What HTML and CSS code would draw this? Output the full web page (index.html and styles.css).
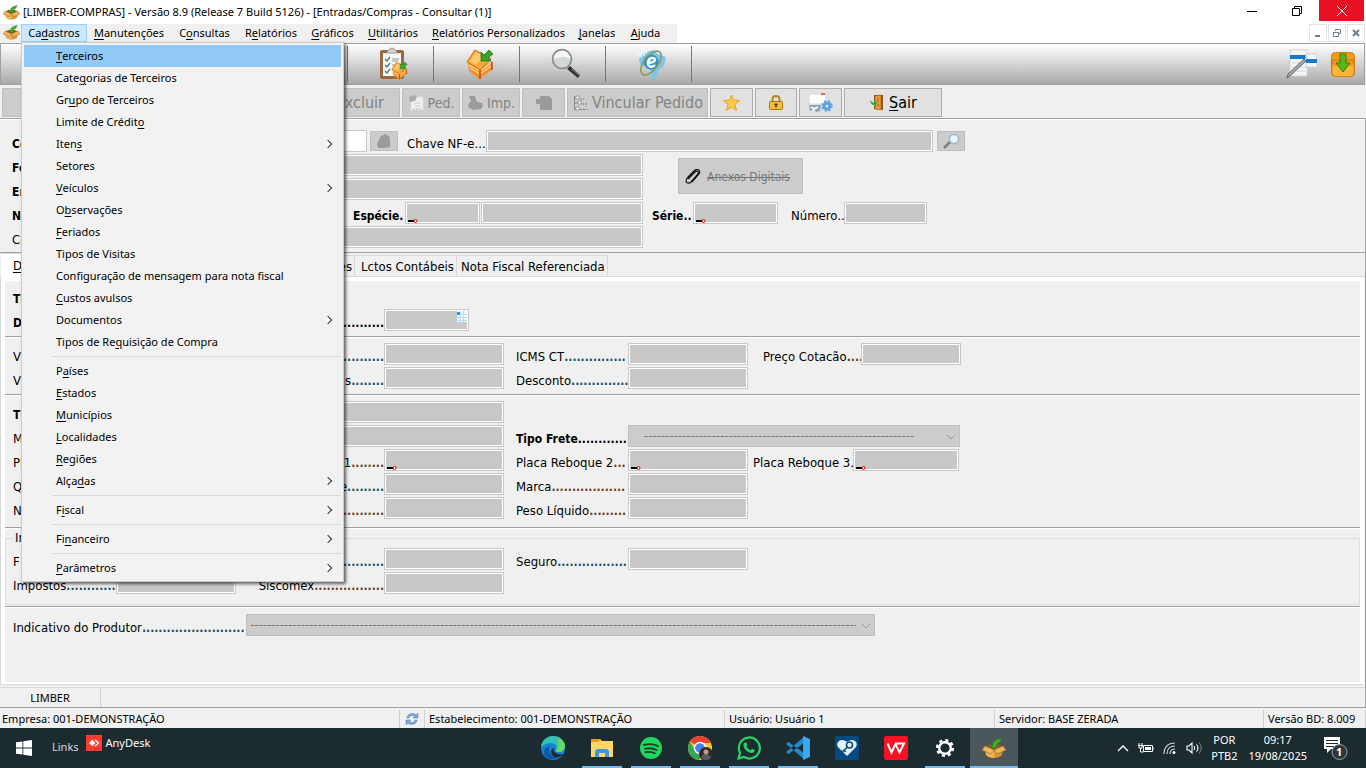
FILE: index.html
```html
<!DOCTYPE html>
<html lang="pt-BR">
<head>
<meta charset="utf-8">
<title>[LIMBER-COMPRAS] - Entradas/Compras</title>
<link rel="stylesheet" href="styles.css">
</head>
<body>
<svg class="defs" aria-hidden="true">
  <defs>
    <symbol id="basket" viewBox="0 0 24 24">
      <path d="M3 11l9 3 9-3-1 8c-2 2-5 3-8 3s-6-1-8-3z" fill="#d9953a"/>
      <path d="M3 11l9 3v8c-3 0-6-1-8-3z" fill="#edb45c"/>
      <path d="M3 11l5-3 4 2 4-2 5 3-9 3z" fill="#8a5a20"/>
      <path d="M3 10L0 14l9 4 3-4zM21 10l3 4-9 4-3-4z" fill="#efb660" stroke="#a8701f" stroke-width=".7"/>
      <path d="M10 12c0-5 2-8 6-9l4-1-2 4c-3 1-4 3-4 6z" fill="#3fae2a" stroke="#1f7a16" stroke-width=".6"/>
    </symbol>
    <symbol id="crate" viewBox="0 0 28 32">
      <path d="M2 15l12 6 12-8v9l-13 9-10-8z" fill="#f3922a"/>
      <path d="M3 17l11 6 11-8M4 20l10 6 11-8" stroke="#ffd894" stroke-width="1.2" fill="none"/>
      <path d="M14 22v9M26 14v8" stroke="#c63a12" stroke-width="1.4"/>
      <path d="M1 14L9 2l16 9-11 11z" fill="#f8a93a" stroke="#c46c10"/>
      <path d="M4 13l6-9 8 4-8 9z" fill="#fdc96a"/>
      <path d="M15 13V4l3 3 5-5 4 4-5 4 3 3z" fill="#3aa32b" stroke="#196f14" stroke-width=".7"/>
    </symbol>
    <symbol id="chev" viewBox="0 0 10 6"><path d="M1 1l4 4 4-4" fill="none" stroke="#9a9a9a"/></symbol>
    <symbol id="mark" viewBox="0 0 10 5"><path d="M0 2h6v2H0z" fill="#000"/><circle cx="7.5" cy="3" r="1.5" fill="#fff" stroke="#e00000"/></symbol>
  </defs>
</svg>
<div class="app">
  <header class="titlebar">
    <svg class="ico16"><use href="#basket"/></svg>
    <h1>[LIMBER-COMPRAS] - Versão 8.9 (Release 7 Build 5126) - [Entradas/Compras - Consultar (1)]</h1>
    <div class="winbtns">
      <button aria-label="Minimizar"><svg viewBox="0 0 12 12"><path d="M1 6.5h10" stroke="#000"/></svg></button>
      <button aria-label="Restaurar"><svg viewBox="0 0 12 12"><path d="M1.500 3.500h7v7h-7zM3.500 3V1.500h7v7H9" stroke="#000" fill="none"/></svg></button>
      <button class="close" aria-label="Fechar"><svg viewBox="0 0 12 12"><path d="M1 1l10 10M11 1L1 11" stroke="#fff"/></svg></button>
    </div>
  </header>

  <div class="menubar">
    <nav class="menus">
      <svg class="ico16"><use href="#basket"/></svg>
      <button class="open">Ca<u>d</u>astros</button>
      <button><u>M</u>anutenções</button>
      <button>C<u>o</u>nsultas</button>
      <button>R<u>e</u>latórios</button>
      <button><u>G</u>ráficos</button>
      <button><u>U</u>tilitários</button>
      <button><u>R</u>elatórios Personalizados</button>
      <button><u>J</u>anelas</button>
      <button><u>A</u>juda</button>
      <div class="dropdown">
        <button class="sel"><u>T</u>erceiros</button>
        <button>Cate<u>g</u>orias de Terceiros</button>
        <button>Gr<u>u</u>po de Terceiros</button>
        <button>Limite de Crédit<u>o</u></button>
        <button class="sub">Iten<u>s</u></button>
        <button>Setores</button>
        <button class="sub"><u>V</u>eículos</button>
        <button>O<u>b</u>servações</button>
        <button><u>F</u>eriados</button>
        <button>Tipos de Visitas</button>
        <button>Configuração de mensagem para nota fiscal</button>
        <button><u>C</u>ustos avulsos</button>
        <button class="sub">Documentos</button>
        <button>Tipos de Re<u>q</u>uisição de Compra</button>
        <hr>
        <button>P<u>a</u>íses</button>
        <button><u>E</u>stados</button>
        <button><u>M</u>unicípios</button>
        <button><u>L</u>ocalidades</button>
        <button><u>R</u>egiões</button>
        <button class="sub">Alça<u>d</u>as</button>
        <hr>
        <button class="sub">F<u>i</u>scal</button>
        <hr>
        <button class="sub">Fi<u>n</u>anceiro</button>
        <hr>
        <button class="sub"><u>P</u>arâmetros</button>
      </div>
    </nav>
    <div class="mdi">
      <button aria-label="Minimizar janela"><svg viewBox="0 0 10 10"><path d="M2 8h5" stroke="#6f7f8f" stroke-width="2"/></svg></button>
      <button aria-label="Restaurar janela"><svg viewBox="0 0 10 10"><path d="M1.500 4.500h5v4h-5zM1 4.500h6M3.500 3V1.500h5v4H7" stroke="#6f7f8f" fill="none"/></svg></button>
      <button aria-label="Fechar janela"><svg viewBox="0 0 10 10"><path d="M2 2l6 6M8 2L2 8" stroke="#6f7f8f" stroke-width="2"/></svg></button>
    </div>
  </div>

  <div class="bigbar">
    <button aria-label="Atalho 1"></button><button aria-label="Atalho 2"></button><button aria-label="Atalho 3"></button><button aria-label="Atalho 4"></button>
    <button aria-label="Pedidos"><svg width="30" height="34" viewBox="0 0 30 34"><rect x="1" y="3" width="24" height="29" rx="2" fill="#9a6a3c"/><rect x="4" y="6" width="18" height="23" fill="#f7f7f5"/><path d="M7 6l2-3h2a2 2 0 0 1 4 0h2l2 3z" fill="#d8d8d8" stroke="#777" stroke-width=".7"/><path d="M6 12l2 2 3-4M6 18l2 2 3-4M6 24l2 2 3-4" stroke="#3c7c99" stroke-width="1.300" fill="none"/><path d="M13 12h7M13 14h6M13 18h5" stroke="#999"/><svg x="12" y="14" width="17" height="19"><use href="#crate"/></svg></svg></button>
    <button aria-label="Compras"><svg width="28" height="32"><use href="#crate"/></svg></button>
    <button aria-label="Pesquisar"><svg width="32" height="32" viewBox="0 0 32 32"><path d="M20 18l10 9-2 3-11-9z" fill="#333"/><path d="M22 21l7 6" stroke="#999"/><circle cx="12" cy="11" r="9.500" fill="#d3d7d8" stroke="#858585" stroke-width="1.500"/><path d="M4 11a8 8 0 0 1 16 0c-5-3-11-2-16 0z" fill="#fff" opacity=".8"/></svg></button>
    <button aria-label="NF-e"><svg width="32" height="32" viewBox="0 0 32 32"><path d="M8 5l9-3 5 4 8 3-2 9-5 4-2 6-4 4-3-4 2-4-5-5-7-2-1-6z" fill="#7fc4ea"/><circle cx="15" cy="14" r="7.500" fill="#2d95ca"/><ellipse cx="15" cy="15" rx="7" ry="14" transform="rotate(38 15 15)" fill="none" stroke="#8f9a55" stroke-width="1.600"/><path d="M11 15c3 0 8-1 8-3 0-3-6-3-7 2-1 5 4 6 7 3" fill="none" stroke="#fff" stroke-width="2.400"/><path d="M1 8V1l4 7V1M8 8V1h4M8 4.500h3" stroke="#eef4f7" stroke-width="1.500" fill="none"/></svg></button>
    <span class="grow"></span>
    <button class="plain" aria-label="Editar lista"><svg width="32" height="30" viewBox="0 0 32 30"><rect x="4" y="1" width="17" height="26" fill="#f3f5f6" stroke="#ccd3d8"/><rect x="4" y="6" width="17" height="4" fill="#1679c8"/><path d="M6 14h13M6 18h13M6 22h13" stroke="#d4d9dc"/><rect x="20" y="5" width="11" height="13" fill="#f3f5f6" stroke="#ccd3d8"/><rect x="20" y="10" width="11" height="4" fill="#1679c8"/><path d="M1 29l1-4L18 10l2 2L4 27z" fill="#a8a8a8" stroke="#555" stroke-width=".8"/></svg></button>
    <button class="plain" aria-label="Baixar"><svg width="24" height="25" viewBox="0 0 24 25"><rect x=".5" y=".5" width="23" height="24" rx="4" fill="#f19a1d" stroke="#d27f0d"/><path d="M2 8h20M2 8l-1 4M22 8l1 4" stroke="#c9770c"/><path d="M2 14h20v6q0 4-4 4H6q-4 0-4-4z" fill="#fbb63a"/><path d="M9 2h6v9h4l-7 9-7-9h4z" fill="#58b616" stroke="#2f8409"/></svg></button>
  </div>

  <div class="actions">
    <button disabled aria-label="Ação 1"></button><button disabled aria-label="Ação 2"></button><button disabled aria-label="Ação 3"></button>
    <button disabled class="right">Excluir</button>
    <button disabled class="small"><svg width="16" height="17" viewBox="0 0 16 17"><path d="M3 3h12v13H3z" fill="#f2f2f2" stroke="#ddd"/><path d="M1 3l5-2 3 2-2 4-5 1z" fill="#aaa"/><path d="M7 9h6M7 12h6M5 15h8" stroke="#b5b5b5" stroke-dasharray="2 1"/></svg>Ped.</button>
    <button disabled class="small"><svg width="16" height="16" viewBox="0 0 16 16"><path d="M2 1h6l2 6 5 1 1 3-2 3-8 1-5-3 1-4 2-1z" fill="#9b9b9f"/></svg>Imp.</button>
    <button disabled class="b43" aria-label="Documento"><svg width="16" height="16" viewBox="0 0 16 16"><path d="M4 1h9l3 3v11H4V9H0V4h4z" fill="#9b9b9f"/></svg></button>
    <button disabled class="b141"><svg width="16" height="16" viewBox="0 0 16 16"><path d="M2.500 1v14M2 3h3M2 8h4M2 14h3" stroke="#888" fill="none"/><path d="M4 1h3v3H4zM6 6h3v3H6zM4 12h3v3H4z" fill="#fff" stroke="#888" stroke-width=".8"/><path d="M8 4h4M10 9h5M8 14.500h7" stroke="#777" stroke-dasharray="2 1"/></svg>Vincular Pedido</button>
    <button class="b43" aria-label="Favorito"><svg width="17" height="17" viewBox="0 0 17 17"><path d="M8.500 1l2 5 6 .5-4.500 4 1.500 6-5-3.300-5 3.300 1.500-6L.5 6.500l6-.5z" fill="#fbc94a" stroke="#eaa32a"/></svg></button>
    <button class="b42" aria-label="Bloquear"><svg width="14" height="15" viewBox="0 0 14 15"><path d="M3.500 7V4a3.500 3 0 0 1 7 0v3" fill="none" stroke="#b5861d" stroke-width="2"/><rect x=".5" y="6.500" width="13" height="8" rx="1" fill="#f3bd3b" stroke="#a87810"/><path d="M7 8.500v4M5.500 9.500h3" stroke="#4c3503" stroke-width="1.300"/></svg></button>
    <button class="b43" aria-label="Configurar"><svg width="25" height="20" viewBox="0 0 25 20"><rect x="1" y="1" width="17" height="10" rx="2" fill="#fdfdfd" stroke="#d5d9dd"/><path d="M13 1h4" stroke="#dd3b3b" stroke-width="1.500"/><path d="M1 12h12l-1 6-4 1-2-3-4 2z" fill="#8fa3ad"/><path d="M3 14l3 2 4-2" stroke="#e9f6f8" stroke-width="2" fill="none"/><circle cx="19" cy="13" r="3" fill="#d5eaff" stroke="#5c9fe4" stroke-width="3"/><circle cx="19" cy="13" r="5" fill="none" stroke="#5c9fe4" stroke-width="1.500" stroke-dasharray="2 2"/></svg></button>
    <button class="b98"><svg width="16" height="17" viewBox="0 0 16 17"><path d="M5 1l9 0v15l-9-1z" fill="#8a5317"/><path d="M6 2l6-1v15l-6-1z" fill="#e39a3c" stroke="#a3661c" stroke-width=".7"/><path d="M8 4h2v4H8zM8 10h2v3H8z" fill="#c77f26"/><path d="M1 6c2 3 3 3 4 2V6l3 3-3 4v-2C3 11 1 9 1 6z" fill="#2eab35"/></svg><span><u>S</u>air</span></button>
  </div>

  <main class="window">
    <section class="head">
      <div class="row">
        <label class="fld keyfld bold"><span class="cap">Có</span><input class="white" type="text"></label>
        <button disabled class="sq" aria-label="Buscar código"><svg width="16" height="16" viewBox="0 0 16 16"><path d="M5 3l4-2 4 2 1 4v7l-5 1H2l-1-4 2-5z" fill="#9b9b9f"/></svg></button>
        <label class="fld nfe"><span class="cap">Chave NF-e...</span><input type="text" disabled></label>
        <button class="sq" aria-label="Consultar chave"><svg width="17" height="16" viewBox="0 0 17 16"><path d="M1 15l6-6" stroke="#777f86" stroke-width="2.500"/><circle cx="11" cy="6" r="4.500" fill="#eaf6ff" stroke="#9fb6c8" stroke-width="1.500"/></svg></button>
      </div>
      <div class="pair">
        <div class="stack">
          <div class="row"><label class="fld lead bold"><span class="cap">Fo</span><input type="text" disabled></label></div>
          <div class="row"><label class="fld lead bold"><span class="cap">En</span><input type="text" disabled></label></div>
        </div>
        <button disabled class="attach"><svg width="16" height="16" viewBox="0 0 16 16"><path d="M3 10l7-7c2-2 4 0 3 2l-7 8c-2 2-5 1-5-1s1-3 3-5l6-6c3-2 6 1 4 4l-7 8" fill="none" stroke="#111" stroke-width="1.200"/></svg><s>Anexos Digitais</s></button>
      </div>
      <div class="row">
        <label class="fld nat bold"><span class="cap">Na</span><input type="text" disabled></label>
        <label class="fld esp bold"><span class="cap">Espécie.</span><input type="text" disabled><svg class="mark"><use href="#mark"/></svg></label>
        <input class="espdesc" type="text" disabled aria-label="Descrição da espécie">
        <label class="fld ser bold"><span class="cap">Série..</span><input type="text" disabled><svg class="mark"><use href="#mark"/></svg></label>
        <label class="fld num"><span class="cap">Número..</span><input type="text" disabled></label>
      </div>
      <div class="row"><label class="fld lead"><span class="cap">Co</span><input type="text" disabled></label></div>
    </section>

    <div class="tabs">
      <button class="active"><u>D</u></button>
      <button class="wide">es</button>
      <button class="t102">Lctos Contábeis</button>
      <button class="t151">Nota Fiscal Referenciada</button>
    </div>

    <div class="panel">
      <section>
        <div class="row"><span class="cap bold">Ti</span></div>
        <div class="row">
          <label class="fld c1 bold"><span class="cap">D</span><input type="text" disabled></label>
          <label class="fld c2 date bold"><span class="cap">..........</span><input type="text" disabled><svg class="cal" viewBox="0 0 10 11"><path d="M0 0h10v11H0z" fill="#f2fbff"/><path d="M0 1h3v3H0z" fill="#2a9be6"/><path d="M3 3.500h7M0 6.500h10M0 9.500h10M3.500 0v11M6.500 0v11" stroke="#b5e2f3"/></svg></label>
        </div>
      </section>
      <section>
        <div class="row">
          <label class="fld c1"><span class="cap">V</span><input type="text" disabled></label>
          <label class="fld c2"><span class="cap"><i class="teal">..........</i></span><input type="text" disabled></label>
          <label class="fld c3"><span class="cap">ICMS CT<i class="teal">...............</i></span><input type="text" disabled></label>
          <label class="fld c4"><span class="cap">Preço Cotacão<i>....</i></span><input type="text" disabled></label>
        </div>
        <div class="row">
          <label class="fld c1"><span class="cap">V</span><input type="text" disabled></label>
          <label class="fld c2"><span class="cap">s<i class="teal">........</i></span><input type="text" disabled></label>
          <label class="fld c3"><span class="cap">Desconto<i class="teal">..............</i></span><input type="text" disabled></label>
        </div>
      </section>
      <section class="transport">
        <div class="row"><label class="fld long bold"><span class="cap">Ti</span><input type="text" disabled></label></div>
        <div class="row">
          <label class="fld long"><span class="cap">M</span><input type="text" disabled></label>
          <label class="fld frete bold"><span class="cap">Tipo Frete............</span><select disabled><option>----------------------------------------------------------------</option></select><svg class="arrow"><use href="#chev"/></svg></label>
        </div>
        <div class="row">
          <label class="fld c1"><span class="cap">Pl</span><input type="text" disabled></label>
          <label class="fld c2"><span class="cap">1<i>........</i></span><input type="text" disabled><svg class="mark"><use href="#mark"/></svg></label>
          <label class="fld c3 tight"><span class="cap">Placa Reboque 2<i>...</i></span><input type="text" disabled><svg class="mark"><use href="#mark"/></svg></label>
          <label class="fld c5"><span class="cap">Placa Reboque 3.</span><input type="text" disabled><svg class="mark"><use href="#mark"/></svg></label>
        </div>
        <div class="row">
          <label class="fld c1"><span class="cap">Q</span><input type="text" disabled></label>
          <label class="fld c2"><span class="cap">e<i class="teal">.........</i></span><input type="text" disabled></label>
          <label class="fld c3"><span class="cap">Marca<i>..................</i></span><input type="text" disabled></label>
        </div>
        <div class="row">
          <label class="fld c1"><span class="cap">N</span><input type="text" disabled></label>
          <label class="fld c2"><span class="cap"><i>..........</i></span><input type="text" disabled></label>
          <label class="fld c3"><span class="cap">Peso Líquido<i>.........</i></span><input type="text" disabled></label>
        </div>
      </section>
      <section class="boxed">
        <fieldset>
          <legend>In</legend>
          <div class="row">
            <label class="fld c1"><span class="cap">F</span><input type="text" disabled></label>
            <label class="fld c2"><span class="cap"><i class="teal">..........</i></span><input type="text" disabled></label>
            <label class="fld c3"><span class="cap">Seguro<i class="teal">.................</i></span><input type="text" disabled></label>
          </div>
          <div class="row">
            <label class="fld c1"><span class="cap">Impostos<i class="teal">............</i></span><input type="text" disabled></label>
            <label class="fld c2"><span class="cap">Siscomex<i>.................</i></span><input type="text" disabled></label>
          </div>
        </fieldset>
      </section>
      <section class="last">
        <div class="row">
          <label class="fld prod"><span class="cap">Indicativo do Produtor<i class="teal">.........................</i></span><select disabled><option>------------------------------------------------------------------------------------------------------------------------------------------------</option></select><svg class="arrow"><use href="#chev"/></svg></label>
        </div>
      </section>
    </div>
    <div class="userbar"><span>LIMBER</span></div>
  </main>

  <footer class="status">
    <span>Empresa: 001-DEMONSTRAÇÃO</span>
    <span class="mid"><svg width="14" height="14" viewBox="0 0 14 14"><path d="M2 6c0-4 6-6 9-3l2-2v5H8l2-2C7 3 4 4 4 6zM12 8c0 4-6 6-9 3l-2 2V8h5l-2 2c3 1 6 0 6-2z" fill="#7aa5d8" stroke="#4c7cb8" stroke-width=".5"/></svg></span>
    <span>Estabelecimento: 001-DEMONSTRAÇÃO</span>
    <span>Usuário: Usuário 1</span>
    <span>Servidor: BASE ZERADA</span>
    <span>Versão BD: 8.009</span>
  </footer>

  <div class="taskbar">
    <div class="tleft">
      <button class="start" aria-label="Iniciar"><svg width="16" height="16" viewBox="0 0 16 16"><path d="M0 2.300L6.500 1.400v6.100H0zM7.300 1.300L16 0v7.500H7.300zM0 8.400h6.500v6.200L0 13.700zM7.300 8.400H16V16l-8.700-1.300z" fill="#fff"/></svg></button>
      <span class="links">Links</span>
      <a class="any" href="#anydesk"><svg width="16" height="16" viewBox="0 0 16 16"><path d="M0 0h16v16H0z" fill="#ff3b30"/><path d="M3 8l3.200-3.200L9.400 8l-3.200 3.200z" fill="#fff"/><path d="M9 4.800L12.400 8 9 11.200" fill="none" stroke="#fff" stroke-width="1.300"/></svg>AnyDesk</a>
    </div>
    <div class="apps">
      <button aria-label="Edge"><svg viewBox="0 0 24 24"><circle cx="12" cy="12" r="12" fill="#1683d3"/><path d="M0 11C1 4 6 0 12 0c7 0 12 5 12 10 0 4-3 6-6 6-2 0-4-1-3-2 2-3 0-7-5-7-4 0-8 2-10 4z" fill="#35c1b0"/><path d="M16 1c5 2 8 6 8 9 0 4-3 6-6 6-2 0-4-1-3-2 3-4 3-8 1-13z" fill="#62d76a"/><path d="M9 10c-3 5 1 12 9 11-5 4-13 3-15-3-1-4 2-7 6-8z" fill="#0e59a4"/><path d="M13 12c-1 5 4 7 9 6-2 3-5 4-8 3-5-2-5-8-1-9z" fill="#1c2b30"/></svg></button>
      <button class="run" aria-label="Explorador"><svg viewBox="0 0 24 24"><path d="M1 3h9l2 2h11v16H1z" fill="#ffd766"/><path d="M1 3h9l-1 3H1z" fill="#e79e0d"/><path d="M5 21v-6l2-2h10l2 2v6h-4v-4H9v4z" fill="#3c97df"/></svg></button>
      <button class="run" aria-label="Spotify"><svg viewBox="0 0 24 24"><circle cx="12" cy="12" r="11" fill="#1ed760"/><path d="M5 9c5-1.500 10-1 14 1.200M6 12.800c4-1 8-.8 11.500 1.200M6.500 16.300c3.500-.8 7-.5 9.500 1" stroke="#142" stroke-width="1.900" fill="none" stroke-linecap="round"/></svg></button>
      <button class="run" aria-label="Chrome"><svg viewBox="0 0 24 24"><circle cx="12" cy="12" r="12" fill="#fcc934"/><path d="M12 12L2 5.500A12 12 0 0 1 23 7H12z" fill="#ea4335"/><path d="M2 5.500A12 12 0 0 0 11 24l5-9-9-1z" fill="#34a853"/><circle cx="12" cy="12" r="5.500" fill="#4285f4" stroke="#fff" stroke-width="1.400"/><circle cx="18" cy="18" r="7" fill="#33292a"/><path d="M13 22c1-4 3-4 5-4s4 1 5 4a7 7 0 0 1-10 0z" fill="#555a62"/><circle cx="18" cy="16" r="2.500" fill="#c99779"/></svg></button>
      <button class="run" aria-label="WhatsApp"><svg viewBox="0 0 24 24"><path d="M1.500 22.500l1.600-5.600A10.500 10.500 0 1 1 7 21z" fill="none" stroke="#25d366" stroke-width="2.200"/><path d="M8 6.500c1-.7 1.500 0 2.300 2.400L9.400 10.200c.9 2 2.400 3.300 4.200 4l1.400-1.500 2.800 1.400c0 2-1.800 3.300-3.700 2.900-4-1-7-3.800-7.700-7.500-.2-1.200.6-2.400 1.600-3z" fill="#25d366"/></svg></button>
      <button class="run" aria-label="VS Code"><svg viewBox="0 0 24 24"><path d="M18 1v6L2.500 18 0 16zM18 23v-6L2.500 6 0 8z" fill="#2489ca"/><path d="M17 0l7 3v18l-7 3z" fill="#36a9f0"/></svg></button>
      <button aria-label="Saúde"><svg viewBox="0 0 24 24"><rect width="24" height="24" rx="2" fill="#044a82"/><path d="M12 20L3 11c-2-3 0-7 4-7 2 0 4 1 5 2 1-1 3-2 5-2 4 0 6 4 4 7z" fill="#e6f1fa"/><circle cx="14.500" cy="9" r="3" fill="none" stroke="#044a82" stroke-width="1.600"/><path d="M12.500 11L7 16M9 14l1.500 2" stroke="#044a82" stroke-width="1.600"/></svg></button>
      <button aria-label="WPS"><svg viewBox="0 0 24 24"><rect width="24" height="24" rx="2" fill="#fb1122"/><path d="M3.500 7.500l4 9 4-8.500 4 8.500 4.500-9h-9" fill="none" stroke="#fff" stroke-width="2"/></svg></button>
      <button class="run" aria-label="Configurações"><svg viewBox="0 0 24 24"><circle cx="12" cy="12" r="5.800" fill="none" stroke="#fff" stroke-width="2.400"/><circle cx="12" cy="12" r="7.800" fill="none" stroke="#fff" stroke-width="2.600" stroke-dasharray="3.126 3"/></svg></button>
      <button class="run on" aria-label="Limber"><svg viewBox="0 0 24 24"><use href="#basket"/></svg></button>
    </div>
    <div class="tray">
      <svg width="12" height="12" viewBox="0 0 12 12"><path d="M1 9l5-5 5 5" fill="none" stroke="#fff" stroke-width="1.300"/></svg>
      <svg width="16" height="12" viewBox="0 0 16 12"><path d="M5.500 3.500h9v6h-9zM15 5v3M1 1v2M4 1v2M0 3.500h5M1 4v2h3V4M2.500 6v4h3" stroke="#fff" fill="none"/><path d="M7 5h6v3H7z" fill="#fff"/></svg>
      <svg width="14" height="14" viewBox="0 0 14 14"><circle cx="11" cy="11.500" r="1.500" fill="#fff"/><path d="M7 13c0-3 2-5 5-5M4 13c0-5 3-8 8-8M1 13C1 6 5 2 12 2" stroke="#d4d8d9" stroke-width="1.200" fill="none"/></svg>
      <svg width="16" height="14" viewBox="0 0 16 14"><path d="M1 5h2l3-3v10L3 9H1zM8 5q1.500 2 0 4M10.500 3.500q3 3.500 0 7" stroke="#fff" stroke-width="1.100" fill="none"/><path d="M13 1.500q4.500 5.500 0 11" stroke="#7f898c" fill="none"/></svg>
      <span class="lang">POR<br>PTB2</span>
      <span class="clock">09:17<br>19/08/2025</span>
      <button class="note" aria-label="Notificações"><svg width="26" height="26" viewBox="0 0 26 26"><path d="M1 2h16v12h-9l-4 4v-4H1z" fill="#fff"/><path d="M3 5.500h12M3 8.500h12M3 11.500h8" stroke="#1c2b30"/><circle cx="16.500" cy="17" r="7.500" fill="#2f3638" stroke="#9aa3a5"/></svg><span>1</span></button>
    </div>
  </div>
</div>
</body>
</html>
```

FILE: styles.css
```css
:root {
  --ui: "Noto Sans", "Open Sans", sans-serif;
  --form: "DejaVu Sans Condensed", "Noto Sans", sans-serif;
  --face: #f0f0f0;
  --field: #c8c8c8;
  --line: #a0a0a0;
}
* { box-sizing: border-box; }
body { margin: 0; background: var(--face); color: #000; font: 11px/16px var(--ui); }
button { font: inherit; color: inherit; margin: 0; padding: 0; border: 0; background: none; }
u { text-underline-offset: 2px; }
svg { display: block; flex: none; }
.defs { position: absolute; width: 0; height: 0; }
.app { display: flex; flex-direction: column; min-height: 100vh; }
.ico16 { width: 17px; height: 17px; }

/* title bar */
.titlebar { display: flex; align-items: center; height: 24px; padding-left: 3px; background: #fff; }
.titlebar h1 { flex: 1; margin: 0 0 0 3px; font-size: 11px; font-weight: 400; white-space: nowrap; }
.winbtns { display: flex; align-self: flex-start; padding-right: 2px; }
.winbtns button { display: grid; place-items: center; width: 45px; height: 21px; }
.winbtns svg { width: 12px; height: 12px; }
.winbtns .close { background: #e81123; }

/* menu bar */
.menubar { display: flex; justify-content: space-between; height: 19px; background: #fff; }
.menus { position: relative; display: grid; grid-template-columns: 18px 66px 84px 67px 66px 57px 64px 147px 50px 47px; padding: 0 8px 0 3px; background: var(--face); }
.menus > button { height: 18px; white-space: nowrap; }
.menus > .open { background: #cce8ff; border: 1px solid #99d1ff; }
.mdi { display: flex; gap: 1px; padding-right: 1px; }
.mdi button { display: grid; place-items: center; width: 18px; height: 18px; border: 1px solid #e3e3e3; }
.mdi svg { width: 10px; height: 10px; }

.dropdown { position: absolute; z-index: 5; left: 21px; top: 18px; width: 323px; padding: 2px; background: #f2f2f2; border: 1px solid #ccc; box-shadow: 2px 2px 3px rgba(0, 0, 0, .6); }
.dropdown button { display: flex; align-items: center; width: 100%; height: 22px; padding: 0 10px 0 32px; white-space: pre; }
.dropdown .sel { background: #91c9f7; }
.dropdown .sub::after { content: ""; width: 5px; height: 5px; margin-left: auto; border: solid #333; border-width: 1px 1px 0 0; transform: rotate(45deg); }
.dropdown hr { height: 1px; margin: 3px 0 3px 28px; border: 0; background: #d7d7d7; }

/* toolbars */
.bigbar { display: flex; align-items: center; height: 42px; margin-right: 1px; padding-left: 3px; background: linear-gradient(#fff, #a9a9a9); border: 1px solid var(--line); }
.bigbar button { display: grid; place-items: center; width: 86px; height: 36px; padding-left: 6px; border-right: 1px solid #777; }
.bigbar .plain { width: auto; margin-right: 13px; padding: 0; border: 0; }
.bigbar .plain + .plain { margin-right: 9px; }
.grow { flex: 1; }
.actions { display: flex; gap: 2px; height: 34px; padding: 3px 2px 2px; background: var(--face); border-bottom: 1px solid var(--line); font: 16px/20px var(--form); }
.actions button { display: flex; align-items: center; justify-content: center; gap: 4px; width: 98px; height: 29px; background: #e1e1e1; border: 1px solid #adadad; white-space: nowrap; }
.actions button:disabled { background: #ccc; border-color: #bfbfbf; color: #838383; }
.actions .right { justify-content: flex-end; padding-right: 15px; }
.actions .small { width: 58px; font-size: 14px; }
.actions .b42 { width: 42px; }
.actions .b43 { width: 43px; }
.actions .b141 { width: 141px; }

/* form */
.window { flex: 1; display: flex; flex-direction: column; font: 13px/18px var(--form); border-right: 1px solid var(--line); }
.row { display: flex; height: 22px; margin-bottom: 2px; }
.fld { position: relative; display: flex; flex: none; }
.cap { flex: 1; min-width: 0; padding-top: 5px; white-space: nowrap; }
.cap i { font-style: normal; font-weight: 700; font-size: 12px; color: #6b3f1d; }
.cap i.teal { color: #15506b; }
.bold .cap, .bold.cap { font-weight: 700; font-size: 12px; }
.row input { flex: none; width: 120px; height: 22px; margin: 0; padding: 0 4px; background: var(--field); border: 1px solid #c8c8c8; border-radius: 0; box-shadow: inset 0 0 0 1px #fff; font: inherit; }
.row input.white { background: #fff; }
.row select { appearance: none; flex: none; height: 22px; margin: 0; padding: 0 18px 0 3px; background: #ccc; border: 1px solid #bfbfbf; border-radius: 0; color: #777; font: inherit; opacity: 1; }
.mark { position: absolute; bottom: 1px; right: 107px; width: 10px; height: 5px; }
.arrow { position: absolute; right: 4px; top: 9px; width: 10px; height: 6px; }
.cal { position: absolute; right: 2px; top: 2px; width: 10px; height: 11px; }

.head { padding: 10px 12px 2px; border-top: 1px solid #fff; border-bottom: 1px solid var(--line); }
.head .row input { width: 526px; }
.lead { width: 631px; }
.keyfld { width: 355px; }
.head .keyfld input { width: 250px; }
.sq { display: grid; place-items: center; width: 28px; height: 20px; margin: 1px 0 0 3px; background: #ccc; border: 1px solid #bfbfbf; }
.nfe { width: 526px; margin-left: 9px; }
.head .nfe input { width: 447px; }
.nfe + .sq { margin-left: 4px; }
.pair { display: flex; }
.stack { flex: none; }
.attach { display: flex; align-items: center; gap: 6px; width: 125px; height: 36px; margin: 4px 0 0 35px; padding: 2px 0 0 6px; background: #ccc; border: 1px solid #bfbfbf; font-size: 12px; white-space: nowrap; }
.attach:disabled { color: #777; }
.nat { width: 320px; }
.head .nat input { width: 215px; }
.esp { width: 127px; margin-left: 21px; }
.head .esp input { width: 75px; }
.esp .mark { right: 62px; }
.head .row .espdesc { width: 162px; margin-left: 1px; }
.ser { width: 126px; margin-left: 9px; }
.head .ser input { width: 85px; }
.ser .mark { right: 72px; }
.num { width: 136px; margin-left: 13px; }
.head .num input { width: 83px; }

.tabs { display: flex; align-items: flex-end; height: 24px; padding-left: 1px; border-bottom: 1px solid #d9d9d9; }
.tabs button { width: 60px; height: 21px; padding: 1px 0 0 4px; border: 1px solid #d9d9d9; border-width: 1px 1px 0 0; text-align: left; white-space: nowrap; }
.tabs .active { height: 24px; margin-bottom: -1px; padding-left: 12px; background: #fff; }
.tabs .wide { width: 294px; padding-right: 2px; text-align: right; }
.tabs .t102 { width: 102px; padding-left: 6px; }
.tabs .t151 { width: 151px; }
.panel { flex: 1; display: flex; flex-direction: column; margin: 0 1px; border: solid #fff; border-width: 4px 4px 2px; box-shadow: -1px 1px 0 #d9d9d9; }
.panel section { padding: 6px 8px 3px; border-bottom: 1px solid var(--line); box-shadow: 0 1px 0 #fff; }
.panel section:first-child { padding-top: 4px; }
.panel .transport { padding-bottom: 6px; }
.c1 { width: 223px; margin-right: 21px; }
.c2 { width: 247px; margin-right: 12px; }
.c2 .cap { text-align: right; }
.c3 { width: 232px; margin-right: 15px; }
.c3.tight { margin-right: 5px; }
.c4 { width: 198px; }
.row .c4 input { width: 100px; }
.c5 { width: 206px; }
.row .c5 input { width: 106px; }
.c5 .mark { right: 93px; }
.long { width: 491px; margin-right: 12px; }
.row .long input { width: 388px; }
.row .date input { width: 85px; }
.date { width: 212px; }
.frete { width: 444px; }
.row .frete select { width: 332px; padding-left: 15px; }
.prod { width: 862px; }
.row .prod select { width: 629px; }
.panel .boxed { padding: 3px 0 1px; }
fieldset { min-width: 0; margin: 0; padding: 3px 7px 8px; border: 1px solid #dcdcdc; }
legend { padding: 0 2px; line-height: 14px; }
.panel .last { flex: 1; padding-top: 7px; border: 0; box-shadow: none; }
.userbar { display: flex; height: 20px; margin-top: 3px; border-top: 1px solid #d9d9d9; font: 11px/20px var(--ui); }
.userbar span { width: 101px; text-align: center; border-right: 1px solid #d0d0d0; }

/* status bar */
.status { display: grid; grid-template-columns: 400px 25px 300px 270px 1fr 102px; height: 21px; padding-top: 2px; border-top: 1px solid var(--line); line-height: 17px; background: var(--face); }
.status span { padding-left: 4px; border-right: 1px solid #d0d0d0; white-space: nowrap; }
.status span:first-child { padding-left: 2px; }
.status .mid { display: grid; place-items: center; padding: 0; }

/* taskbar */
.taskbar { display: grid; grid-template-columns: 529px 1fr auto; height: 40px; background: #1c2b30; color: #fff; }
.tleft { display: flex; }
.start { display: grid; place-items: center; width: 48px; }
.links { padding: 11px 7px 0 4px; color: #d5d9da; }
.any { display: flex; gap: 4px; align-self: flex-start; padding-top: 7px; color: #fff; text-decoration: none; }
.apps { display: flex; gap: 1px; }
.apps button { display: grid; place-items: center; width: 48px; height: 40px; position: relative; }
.apps svg { width: 24px; height: 24px; }
.apps .run::after { content: ""; position: absolute; left: 4px; right: 4px; bottom: 0; height: 2px; background: #76b9ed; }
.apps .on { background: #4b575b; }
.apps .on::after { left: 0; right: 0; }
.tray { display: flex; align-items: center; gap: 9px; padding-right: 17px; }
.lang, .clock { text-align: center; }
.clock { margin-left: 2px; }
.note { position: relative; margin-left: 7px; }
.note span { position: absolute; left: 13px; top: 9px; font-weight: 700; }
```
